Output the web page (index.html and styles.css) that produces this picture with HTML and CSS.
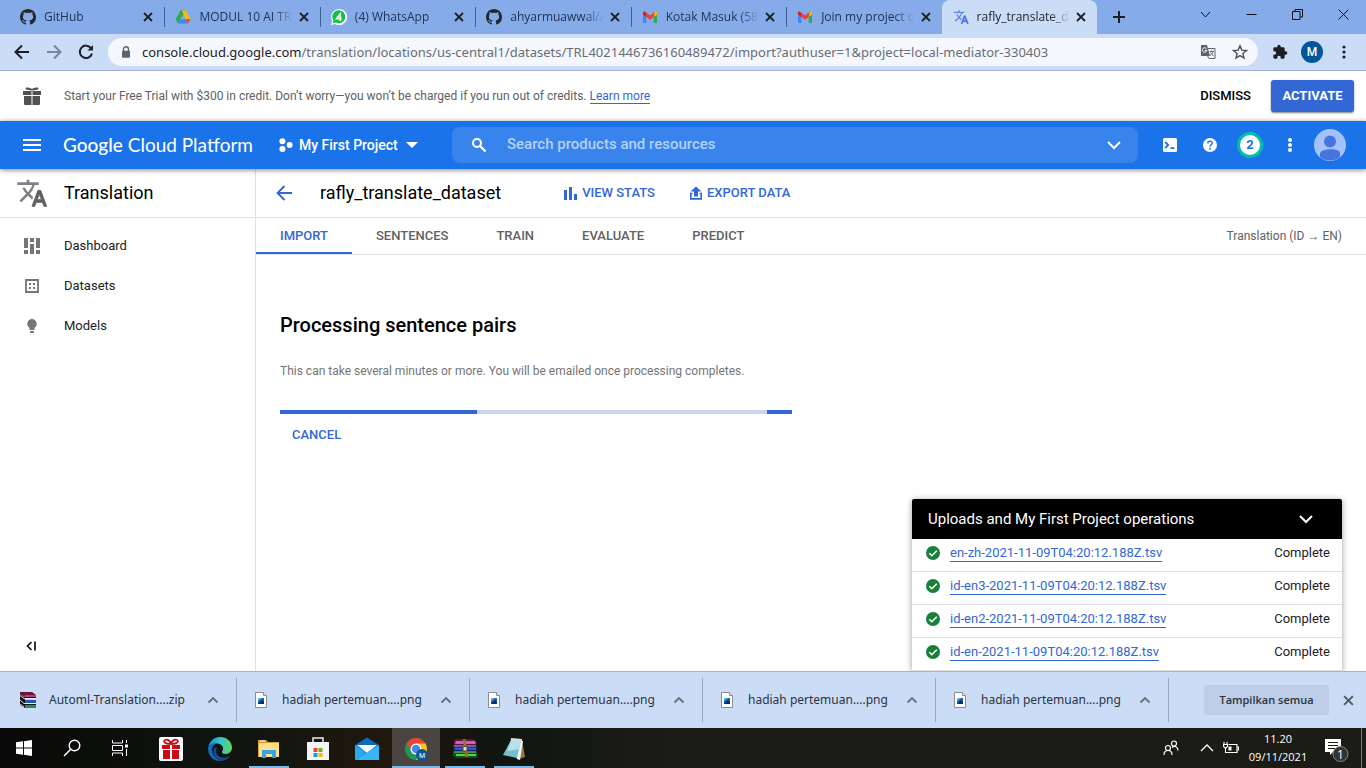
FILE: index.html
```html
<!DOCTYPE html>
<html lang="en">
<head>
<meta charset="utf-8">
<meta name="viewport" content="width=device-width, initial-scale=1">
<title>rafly_translate_dataset</title>
<link rel="stylesheet" href="styles.css">
</head>
<body>
<svg class="sprite" aria-hidden="true">
  <symbol id="close" viewBox="0 0 10 10"><path d="M1 1l8 8M9 1L1 9" fill="none" stroke="currentColor" stroke-width="1.8"/></symbol>
  <symbol id="github" viewBox="0 0 16 16"><path fill="#24292f" d="M8 0C3.58 0 0 3.58 0 8c0 3.54 2.29 6.53 5.47 7.59.4.07.55-.17.55-.38 0-.19-.01-.82-.01-1.49-2.01.37-2.53-.49-2.69-.94-.09-.23-.48-.94-.82-1.13-.28-.15-.68-.52-.01-.53.63-.01 1.08.58 1.23.82.72 1.21 1.87.87 2.33.66.07-.52.28-.87.51-1.07-1.78-.2-3.64-.89-3.64-3.95 0-.87.31-1.59.82-2.15-.08-.2-.36-1.02.08-2.12 0 0 .67-.21 2.2.82.64-.18 1.32-.27 2-.27s1.36.09 2 .27c1.53-1.04 2.2-.82 2.2-.82.44 1.1.16 1.92.08 2.12.51.56.82 1.27.82 2.15 0 3.07-1.87 3.75-3.65 3.95.29.25.54.73.54 1.48 0 1.07-.01 1.93-.01 2.2 0 .21.15.46.55.38A8.01 8.01 0 0 0 16 8c0-4.42-3.58-8-8-8z"/></symbol>
  <symbol id="gmail" viewBox="0 0 16 16"><path fill="#4285f4" d="M1 4.5l3.3 2.4V14H2a1 1 0 0 1-1-1z"/><path fill="#34a853" d="M15 4.5l-3.3 2.4V14H14a1 1 0 0 0 1-1z"/><path fill="#fbbc04" d="M11.7 4.2v3.7L15 5.4V4c0-1.4-1.3-2-2.3-1.2z"/><path fill="#c5221f" d="M1 4v1.4l3.3 2.5V4.2l-1-1.4C2.300 2 1 2.600 1 4z"/><path fill="#ea4335" d="M3.300 2.800L8 6.500l4.700-3.700-1 5.100L8 10.700 4.300 7.900z"/></symbol>
  <symbol id="translate" viewBox="0 0 24 24"><path d="M12.870 15.070l-2.540-2.510.03-.03A17.520 17.520 0 0 0 14.070 6H17V4h-7V2H8v2H1v2h11.170C11.500 7.920 10.440 9.750 9 11.350 8.070 10.320 7.300 9.190 6.690 8h-2c.73 1.630 1.730 3.170 2.980 4.560l-5.090 5.020L4 19l5-5 3.110 3.110.76-2.040z" opacity=".8"/><path d="M18.500 10h-2L12 22h2l1.120-3h4.750L21 22h2zm-2.620 7l1.620-4.330L19.120 17z" stroke="currentColor" stroke-width=".7"/></symbol>
  <symbol id="image" viewBox="0 0 12 16"><path d="M.5.5h8l3 3v12H.5z" fill="#fff" stroke="#8d8d8d"/><path d="M8.500.5v3h3" fill="#eee" stroke="#8d8d8d"/><path fill="#1b62b5" d="M3 6h6v6H3z"/><path fill="#58b9f5" d="M3 6h4L3 9z"/><path fill="#0c2c62" d="M3 12l4-4 2 2v2z"/></symbol>
  <symbol id="up" viewBox="0 0 12 12"><path d="M1.500 8.500L6 4l4.500 4.500" fill="none" stroke="#6b7078" stroke-width="1.900"/></symbol>
  <symbol id="down" viewBox="0 0 16 16"><path d="M2 5l6 6 6-6" fill="none" stroke="#fff" stroke-width="2"/></symbol>
  <symbol id="check" viewBox="0 0 14 14"><circle cx="7" cy="7" r="7" fill="#188038"/><path d="M3.300 7.200l2.500 2.500 5-5" fill="none" stroke="#fff" stroke-width="1.600"/></symbol>
  <symbol id="rar" viewBox="0 0 16 16"><path fill="#6e1236" d="M0 0h12l4 3v2H5L0 2z"/><path fill="#c4388a" d="M5 3h11v2H5z"/><path fill="#111" d="M0 2l4 3h12v1H5v2h11v1H5v3h11v1H5v3L0 13z"/><path fill="#2358b5" d="M5 8h11v3H5z"/><path fill="#1c9161" d="M5 13h11v3H5z"/><path d="M0 3.500l4 3h12M0 8l4 3.500h12M0 12l4 3" fill="none" stroke="#eee" stroke-width=".9"/></symbol>
</svg>

<header class="browser">
  <div class="tabstrip">
    <div class="tabs">
      <div class="tab"><svg class="favicon"><use href="#github"/></svg><span class="tab-title">GitHub</span><button class="tab-close" aria-label="Close tab"><svg><use href="#close"/></svg></button></div>
      <div class="tab"><svg class="favicon" viewBox="0 0 16 16"><path fill="#34a853" d="M5.500 1.500L8 6 3 14.500.5 10.300z"/><path fill="#188038" d="M5.500 1.500h5L8 6z"/><path fill="#fbbc04" d="M6.500 1.500h4l5 8.800h-4.500z"/><path fill="#4285f4" d="M5.400 10.300h5.400l2.200 4.200H3z"/><path fill="#ea4335" d="M10.600 10.300h4.900L13 14.500z"/></svg><span class="tab-title">MODUL 10 AI TRA</span><button class="tab-close" aria-label="Close tab"><svg><use href="#close"/></svg></button></div>
      <div class="tab"><svg class="favicon" viewBox="0 0 16 16"><path fill="#fff" d="M0 16l1.200-4A8 8 0 1 1 4 14.900z"/><path fill="#12c143" d="M1.600 14.500l.9-3A6.500 6.500 0 1 1 5 13.600z"/><path d="M9.300 12V4.800L5.500 9.700h5.300" fill="none" stroke="#fff" stroke-width="1.600"/></svg><span class="tab-title">(4) WhatsApp</span><button class="tab-close" aria-label="Close tab"><svg><use href="#close"/></svg></button></div>
      <div class="tab"><svg class="favicon"><use href="#github"/></svg><span class="tab-title">ahyarmuawwal/A</span><button class="tab-close" aria-label="Close tab"><svg><use href="#close"/></svg></button></div>
      <div class="tab"><svg class="favicon"><use href="#gmail"/></svg><span class="tab-title">Kotak Masuk (588</span><button class="tab-close" aria-label="Close tab"><svg><use href="#close"/></svg></button></div>
      <div class="tab"><svg class="favicon"><use href="#gmail"/></svg><span class="tab-title">Join my project o</span><button class="tab-close" aria-label="Close tab"><svg><use href="#close"/></svg></button></div>
      <div class="tab active"><svg class="favicon blue"><use href="#translate"/></svg><span class="tab-title">rafly_translate_da</span><button class="tab-close" aria-label="Close tab"><svg><use href="#close"/></svg></button></div>
    </div>
    <button class="new-tab" aria-label="New tab"><svg viewBox="0 0 12 12"><path d="M6 0v12M0 6h12" stroke="#1c2026" stroke-width="2"/></svg></button>
    <div class="window-controls">
      <button aria-label="Search tabs"><svg viewBox="0 0 11 11"><path d="M1 3l4.500 5L10 3"/></svg></button>
      <button aria-label="Minimize"><svg viewBox="0 0 11 11"><path d="M.5 5.500h10"/></svg></button>
      <button aria-label="Restore"><svg viewBox="0 0 11 11"><path d="M.5 2.500h7.500v8H.5zM3 2.500V.5h7.500v7.500H8"/></svg></button>
      <button aria-label="Close"><svg viewBox="0 0 11 11"><path d="M.5.5l10 10M10.500.5l-10 10"/></svg></button>
    </div>
  </div>
  <div class="toolbar">
    <button class="tool" aria-label="Back"><svg viewBox="0 0 16 16"><path d="M15 8H2M8 1.500L1.500 8 8 14.500"/></svg></button>
    <button class="tool muted" aria-label="Forward"><svg viewBox="0 0 16 16"><path d="M1 8h13M8 1.500L14.500 8 8 14.500"/></svg></button>
    <button class="tool" aria-label="Reload"><svg viewBox="0 0 16 16"><path d="M13.200 4.400A6.200 6.200 0 1 0 14 9.500"/><path d="M9.500 6.500H15V1z" fill="#1c2026" stroke="none"/></svg></button>
    <div class="omnibox">
      <svg class="lock" viewBox="0 0 10 13"><path d="M2.500 5V3.200a2.500 2.500 0 0 1 5 0V5" fill="none" stroke="#5f6368" stroke-width="1.400"/><rect x="1" y="4.800" width="8" height="7" rx="1" fill="#5f6368"/></svg>
      <div class="url"><span class="host">console.cloud.google.com</span>/translation/locations/us-central1/datasets/TRL4021446736160489472/import?authuser=1&amp;project=local-mediator-330403</div>
      <button class="tool" aria-label="Translate this page"><svg viewBox="0 0 16 16"><path d="M6 4.500h9v10H9L7 11" fill="#f4f7fd" stroke="#5f6368" stroke-width="1"/><path d="M1 1h6l3 11H1z" fill="#5f6368" stroke="none"/><path d="M6.500 4.800a2.200 2.200 0 1 0 .3 1.700H4.800" stroke="#fff" stroke-width="1"/><path d="M9.500 7.500h4.500M11.500 6.500v1M13 7.500c-.5 2-1.500 3-3 4M10.500 8.500l3 3.500" stroke="#5f6368" stroke-width=".9"/></svg></button>
      <button class="tool" aria-label="Bookmark this page"><svg viewBox="0 0 16 16"><path d="M8 1.800l1.800 4.300 4.700.4-3.600 3 1.100 4.600-4-2.500-4 2.500 1.100-4.600-3.600-3 4.700-.4z" stroke="#4c5056" stroke-width="1.400"/></svg></button>
    </div>
    <button class="tool" aria-label="Extensions"><svg viewBox="0 0 24 24"><path fill="#1c2026" stroke="none" d="M20.500 11H19V7c0-1.100-.9-2-2-2h-4V3.500a2.500 2.500 0 0 0-5 0V5H4c-1.100 0-2 .9-2 2v3.800h1.500a2.700 2.700 0 0 1 0 5.400H2V20c0 1.100.9 2 2 2h3.800v-1.500a2.700 2.700 0 0 1 5.400 0V22H17c1.100 0 2-.9 2-2v-4h1.500a2.500 2.500 0 0 0 0-5z"/></svg></button>
    <button class="profile" aria-label="Profile M">M</button>
    <button class="tool" aria-label="Menu"><svg viewBox="0 0 16 16"><g fill="#1c2026" stroke="none"><circle cx="8" cy="3" r="1.600"/><circle cx="8" cy="8" r="1.600"/><circle cx="8" cy="13" r="1.600"/></g></svg></button>
  </div>
</header>

<section class="trial">
  <svg class="gift" viewBox="0 0 18 18"><g fill="#515151"><path d="M0 4h8.500v4H0zM9.500 4H18v4H9.500zM1 9h7.500v9H2.500C1.500 18 1 17.500 1 16.500zM9.500 9H17v7.500c0 1-.5 1.500-1.500 1.500h-6zM8.500 3.500C6 3 3 3 2.500 1.500 2.500 0 6 0 9 2c3-2 6.500-2 6.500-.5C15 3 12 3 9.500 3.500z"/></g></svg>
  <p>Start your Free Trial with $300 in credit. Don’t worry—you won’t be charged if you run out of credits. <a href="#">Learn more</a></p>
  <button class="dismiss">DISMISS</button>
  <button class="activate">ACTIVATE</button>
</section>

<div class="platform-bar">
  <button class="hamburger" aria-label="Navigation menu"><svg viewBox="0 0 18 12"><path d="M0 1h18M0 6h18M0 11h18" stroke="#fff" stroke-width="2"/></svg></button>
  <a class="logo" href="#"><b>Google</b> Cloud Platform</a>
  <button class="project"><svg viewBox="0 0 14 14"><g fill="#fff"><circle cx="3.400" cy="3.200" r="3"/><circle cx="3.400" cy="11" r="3"/><circle cx="10.600" cy="7" r="3"/></g></svg>My First Project<svg class="caret" viewBox="0 0 12 6"><path fill="#fff" d="M0 0h12L6 6z"/></svg></button>
  <div class="search">
    <svg viewBox="0 0 16 16"><circle cx="6" cy="6" r="4" fill="none" stroke="#fff" stroke-width="2"/><path d="M9 9l5.500 5.500" stroke="#fff" stroke-width="2.400"/></svg>
    <input type="text" placeholder="Search products and resources" aria-label="Search products and resources">
    <button aria-label="Show search options"><svg><use href="#down"/></svg></button>
  </div>
  <div class="bar-actions">
    <button aria-label="Cloud Shell"><svg viewBox="0 0 16 16"><rect x="1" y="1" width="14" height="14" rx="1.500" fill="#fff"/><path d="M3.200 5l3 3-3 3M8.500 11.200h4" fill="none" stroke="#1a73e8" stroke-width="1.800"/></svg></button>
    <button aria-label="Help"><svg viewBox="0 0 16 16"><circle cx="8" cy="8" r="7" fill="#fff"/><path d="M5.800 6.500C5.800 3.500 10.300 3.700 10.200 6.200 10.200 7.800 8 7.800 8 9.700" fill="none" stroke="#1a73e8" stroke-width="1.500"/><circle cx="8" cy="11.800" r="1" fill="#1a73e8"/></svg></button>
    <button aria-label="2 notifications"><span class="count">2</span></button>
    <button aria-label="More options"><svg viewBox="0 0 16 16"><g fill="#fff"><circle cx="8" cy="3" r="2"/><circle cx="8" cy="8" r="2"/><circle cx="8" cy="13" r="2"/></g></svg></button>
    <button aria-label="Account"><svg class="avatar" viewBox="0 0 32 32"><circle cx="16" cy="16" r="16" fill="#a4c2fa"/><circle cx="16" cy="12.500" r="6" fill="#4574df"/><path d="M6 28v-3c0-6 20-6 20-1v4a16 16 0 0 1-20 0z" fill="#4574df"/></svg></button>
  </div>
</div>

<div class="workspace">
  <aside class="sidebar">
    <div class="product"><svg><use href="#translate"/></svg><h1>Translation</h1></div>
    <nav>
      <a href="#"><svg viewBox="0 0 16 16"><path fill="#757575" d="M0 0h4v10H0zM0 12h4v4H0zM6 0h4v4H6zM6 6h4v10H6zM12 0h4v10h-4zM12 12h4v4h-4z"/></svg>Dashboard</a>
      <a href="#"><svg viewBox="0 0 16 16"><path d="M2 2h12v12H2z" fill="none" stroke="#757575" stroke-width="1.800"/><path fill="#757575" d="M5 5h2v2H5zM9 5h2v2H9zM5 9h2v2H5zM9 9h2v2H9z"/></svg>Datasets</a>
      <a href="#"><svg viewBox="0 0 16 16"><path fill="#757575" d="M8 1a4.800 4.800 0 0 0-2.500 8.800V12h5V9.800A4.800 4.800 0 0 0 8 1zM6 13h4v1.500L9 15H7l-1-.5z"/></svg>Models</a>
    </nav>
    <button class="collapse" aria-label="Collapse menu"><svg viewBox="0 0 10 10"><path d="M5.500 1L1.500 5l4 4M9 .5v9" fill="none" stroke="#111" stroke-width="1.700"/></svg></button>
  </aside>
  <main>
    <div class="dataset-bar">
      <button class="back" aria-label="Back"><svg viewBox="0 0 16 16"><path d="M16 8H1.500M8.500 1l-7 7 7 7" fill="none" stroke="#3367d6" stroke-width="1.900"/></svg></button>
      <h2>rafly_translate_dataset</h2>
      <button class="action stats"><svg viewBox="0 0 14 14"><path fill="#3367d6" d="M0 4h3v10H0zM5 1h3v13H5zM10 8h3v6h-3z"/></svg>VIEW STATS</button>
      <button class="action"><svg viewBox="0 0 14 14"><path d="M3.500 7.500H1.800v5.400h10.400V7.500h-1.700" fill="none" stroke="#3367d6" stroke-width="1.600"/><path fill="#3367d6" d="M7 .5l5.500 5H9v5H5v-5H1.500z"/></svg>EXPORT DATA</button>
    </div>
    <div class="sections">
      <a class="current" href="#">IMPORT</a><a href="#">SENTENCES</a><a href="#">TRAIN</a><a href="#">EVALUATE</a><a href="#">PREDICT</a>
      <span class="languages">Translation (ID → EN)</span>
    </div>
    <div class="status">
      <h3>Processing sentence pairs</h3>
      <p>This can take several minutes or more. You will be emailed once processing completes.</p>
      <div class="progress" role="progressbar" aria-label="Processing sentence pairs"><span></span><span></span></div>
      <button class="cancel">CANCEL</button>
    </div>
  </main>
  <section class="operations">
    <header>Uploads and My First Project operations<button aria-label="Collapse"><svg><use href="#down"/></svg></button></header>
    <ul>
      <li><svg><use href="#check"/></svg><a href="#">en-zh-2021-11-09T04:20:12.188Z.tsv</a><span>Complete</span></li>
      <li><svg><use href="#check"/></svg><a href="#">id-en3-2021-11-09T04:20:12.188Z.tsv</a><span>Complete</span></li>
      <li><svg><use href="#check"/></svg><a href="#">id-en2-2021-11-09T04:20:12.188Z.tsv</a><span>Complete</span></li>
      <li><svg><use href="#check"/></svg><a href="#">id-en-2021-11-09T04:20:12.188Z.tsv</a><span>Complete</span></li>
    </ul>
  </section>
</div>

<section class="downloads">
  <div class="download"><svg class="file"><use href="#rar"/></svg><span>Automl-Translation....zip</span><button aria-label="Options"><svg><use href="#up"/></svg></button></div>
  <div class="download"><svg class="file"><use href="#image"/></svg><span>hadiah pertemuan....png</span><button aria-label="Options"><svg><use href="#up"/></svg></button></div>
  <div class="download"><svg class="file"><use href="#image"/></svg><span>hadiah pertemuan....png</span><button aria-label="Options"><svg><use href="#up"/></svg></button></div>
  <div class="download"><svg class="file"><use href="#image"/></svg><span>hadiah pertemuan....png</span><button aria-label="Options"><svg><use href="#up"/></svg></button></div>
  <div class="download"><svg class="file"><use href="#image"/></svg><span>hadiah pertemuan....png</span><button aria-label="Options"><svg><use href="#up"/></svg></button></div>
  <button class="show-all">Tampilkan semua</button>
  <button class="shelf-close" aria-label="Close downloads"><svg><use href="#close"/></svg></button>
</section>

<footer class="taskbar">
  <div class="system-apps">
    <button aria-label="Start"><svg viewBox="0 0 24 24"><path fill="#fff" d="M4 6.200l7-.9v6.200H4zM12 5.200L20 4v7.500h-8zM4 12.500h7v6.200l-7-.9zM12 12.500h8V20l-8-1.200z"/></svg></button>
    <button aria-label="Search"><svg viewBox="0 0 24 24"><circle cx="14.500" cy="9.500" r="5.300" fill="none" stroke="#fff" stroke-width="1.400"/><path d="M10.700 13.300L4 20" stroke="#fff" stroke-width="1.500"/></svg></button>
    <button aria-label="Task View"><svg viewBox="0 0 24 24"><path d="M4.500 4v3h10V4M4.500 20v-3h10v3M4.500 9.500h10v5h-10zM18.500 4v3M18.500 13v7" fill="none" stroke="#fff"/><path fill="#fff" d="M17 8.500h3v3h-3z"/></svg></button>
  </div>
  <div class="apps">
    <button aria-label="Rewards"><svg viewBox="0 0 24 24"><rect width="24" height="24" rx="2" fill="#fff"/><path fill="#c70c18" d="M3 8h8v4H3zM13 8h8v4h-8zM4 13h7v9H4zM13 13h7v9h-7z"/><path d="M12 7C5 7 4 4 6 3s5 0 6 4c1-4 4-5 6-4s1 4-6 4z" fill="none" stroke="#c70c18" stroke-width="1.800"/></svg></button>
    <button aria-label="Edge"><svg viewBox="0 0 24 24"><defs><linearGradient id="edge-top"><stop stop-color="#1689d3"/><stop offset=".5" stop-color="#31c5d5"/><stop offset="1" stop-color="#64d84e"/></linearGradient></defs><path fill="url(#edge-top)" d="M.3 10C1.500 4 6.500 0 12 0c7 0 12 5 12 10.500 0 4-3 6.500-6.500 6.500-2.500 0-3.500-1-3.500-2s1-1.500 1-3.500c0-3-3-5-6.500-5C5 6.500 2 8 .3 10z"/><path fill="#1268bd" d="M0 12c0-4 4-5.700 8-5.500-3 1.500-4.500 5-3.500 9S9 22 13 23.900C6 24.600 0 19 0 12z"/><path fill="#114a91" d="M9 10.500c-2 3-1 9 6 10 3 .3 5.500-.5 7.500-1.700C20.500 22 17 24 13 24 6 22 3.500 15 6.500 11c.7-1 1.700-1 2.500-.5z"/></svg></button>
    <button class="running" aria-label="File Explorer"><svg viewBox="0 0 24 24"><path fill="#dca238" d="M1 3h8l2 2h11v15H1z"/><path fill="#ffe08a" d="M2 6h20v14H2z"/><path fill="#fff" d="M3 3.500h5v1H3z"/><path fill="#35a5e5" d="M5 13h14v8h-4v-4H9v4H5z"/></svg></button>
    <button aria-label="Store"><svg viewBox="0 0 24 24"><path d="M7 5.500V1h10v4.500" fill="none" stroke="#eee" stroke-width="1.500"/><path fill="#f4f4f4" d="M1 5h22v18H1z"/><path fill="#e64a21" d="M7.500 11h4v4h-4z"/><path fill="#6fb51f" d="M12.500 11h4v4h-4z"/><path fill="#129bdf" d="M7.500 16h4v4h-4z"/><path fill="#f7b800" d="M12.500 16h4v4h-4z"/></svg></button>
    <button aria-label="Mail"><svg viewBox="0 0 24 24"><path fill="#0b69b8" d="M0 8l12-7.500L24 8v14H0z"/><path fill="#f3f7fc" d="M2 8h20L12 16z"/><path fill="#2baaeb" d="M0 8l11 7.500L0 23z"/><path fill="#36b7f4" d="M24 8L0 23h24z"/></svg></button>
    <button class="running focused" aria-label="Chrome"><svg viewBox="0 0 24 24"><circle cx="12" cy="12" r="11" fill="#219653"/><path fill="#e74435" d="M12 12H6.500L2.500 6.500A11 11 0 0 1 21.500 6.500H12z"/><path fill="#fbc317" d="M12 6.500h9.500A11 11 0 0 1 12 23l5-9z"/><circle cx="12" cy="12" r="5.500" fill="#fff"/><circle cx="12" cy="12" r="4.200" fill="#438bea"/><circle cx="18" cy="18" r="6" fill="#0c5696"/><text x="18" y="20.500" class="chrome-user">M</text></svg></button>
    <button class="running" aria-label="WinRAR"><svg viewBox="0 0 24 24"><path fill="#641346" d="M1 3l3-1h17l2 3v4H1z"/><path fill="#d061ac" d="M3 4h19l1 3H2z"/><path fill="#16205c" d="M0 9h24v6H0z"/><path fill="#3151e0" d="M2 10.500h21v2.500H2z"/><path fill="#0f5218" d="M0 15h24v6H3l-3-2z"/><path fill="#46d940" d="M3 17h20v2H3z"/><path d="M1 9h22M1 15h22" stroke="#d5c9d5" stroke-width=".8"/><path d="M11 2l3 18" stroke="#a07022" stroke-width="2.500"/><path d="M10 9.500h4v4.500h-4z" fill="#ddd" stroke="#5d451d"/></svg></button>
    <button class="running" aria-label="Notepad"><svg viewBox="0 0 24 24"><path fill="#987448" d="M20 3l3 17-6 2z"/><path fill="#eefafa" d="M10 2l11 2-3 19-3-1z"/><path fill="#78bfcb" d="M9 3l10 1-4 17-14-3z"/><path fill="#b6e2e7" d="M9 3l10 1-2 8-11.500 2z"/><path d="M9 2l11 1" stroke="#dedede" stroke-width="2"/></svg></button>
  </div>
  <div class="tray">
    <button class="people" aria-label="People"><svg viewBox="0 0 16 16"><g fill="none" stroke="#fff" stroke-width="1.200"><circle cx="5" cy="8" r="2.500"/><path d="M1 15c0-6 8-6 8 0"/><circle cx="11" cy="3.500" r="2.500"/><path d="M9 7.500c2.500-2.500 6-.5 6 3"/></g></svg></button>
    <button class="more" aria-label="Show hidden icons"><svg viewBox="0 0 16 16"><path d="M2 11l6-6 6 6" fill="none" stroke="#fff" stroke-width="1.300"/></svg></button>
    <button class="power" aria-label="Battery"><svg viewBox="0 0 16 16"><path d="M5.500 4.500h8.500v8H4.500M14 7h1.500v3H14M2.500 8.500v4h2M1 2v2M4 2v2M.5 4.500h4v2l-2 2-2-2z" fill="none" stroke="#fff" stroke-width="1.100"/><path fill="#fff" d="M5.500 6.500h3v4h-3z"/></svg></button>
    <time class="clock"><span>11.20</span><span>09/11/2021</span></time>
    <button class="notice" aria-label="1 notification"><svg viewBox="0 0 24 24"><path fill="#fff" d="M0 1h16v13H8l-3 3v-3H0z"/><path d="M3 4.500h10M3 7.500h10M3 10.500h7" stroke="#1b1b17"/><circle cx="15.500" cy="16" r="7.500" fill="#333" stroke="#888"/><text x="15.500" y="20.500" class="notice-count">1</text></svg></button>
  </div>
</footer>
</body>
</html>
```
FILE: styles.css
```css
* { box-sizing: border-box; }
body {
  margin: 0;
  min-height: 100vh;
  display: flex;
  flex-direction: column;
  font: 13px/20px Roboto, "Liberation Sans", sans-serif;
  color: #000;
  background: #fff;
}
h1, h2, h3, p, ul { margin: 0; padding: 0; }
h1, h2, h3 { font-weight: 400; }
button { border: 0; padding: 0; background: none; font: inherit; color: inherit; display: flex; align-items: center; justify-content: center; }
svg { display: block; flex: none; }
.sprite { position: absolute; width: 0; height: 0; }

.browser, .downloads, .taskbar { font-family: "Open Sans", "Noto Sans", sans-serif; }
.tabstrip { display: flex; height: 34px; background: #85ace9; }
.tabs { display: grid; grid-template-columns: repeat(7, 1fr); flex: 0 1 1097px; min-width: 0; padding-left: 9px; }
.tab { display: flex; align-items: center; gap: 8px; padding: 0 11px; min-width: 0; font-size: 12px; color: #1f3050; }
.tab + .tab { background: linear-gradient(#3f5f96, #3f5f96) left center / 1px 20px no-repeat; }
.tab.tab.active { background: #cbdcf7; color: #20242c; border-radius: 8px 8px 0 0; }
.favicon { width: 16px; height: 16px; }
.favicon.blue { color: #4272db; fill: #4272db; }
.tab-title { flex: 1; min-width: 0; margin-right: -6px; overflow: hidden; white-space: nowrap; mask-image: linear-gradient(90deg, #000 calc(100% - 24px), transparent calc(100% - 4px)); }
.tab-close { color: #1c2026; }
.tab-close svg { width: 10px; height: 10px; }
.new-tab { width: 44px; }
.new-tab svg { width: 12px; height: 12px; }
.window-controls { display: flex; margin-left: auto; height: 29px; }
.window-controls button { width: 46px; }
.window-controls svg { width: 11px; height: 11px; fill: none; stroke: #111; }

.toolbar { display: flex; align-items: center; height: 37px; padding: 0 6px; background: #cbdcf7; border-bottom: 1px solid #a3aecb; }
.tool { width: 32px; height: 28px; }
.tool svg { width: 16px; height: 16px; fill: none; stroke: #1c2026; stroke-width: 2; }
.tool.muted { opacity: .45; }
.omnibox { flex: 1; min-width: 0; display: flex; align-items: center; height: 28px; margin: 0 6px; padding: 0 2px 0 13px; border-radius: 14px; background: #f4f7fd; }
.lock { width: 10px; height: 13px; margin-right: 11px; }
.url { flex: 1; min-width: 0; overflow: hidden; white-space: nowrap; font: 13px/20px "Noto Sans", sans-serif; color: #6a6e74; }
.host { color: #1e2126; }
.profile { width: 22px; height: 22px; margin: 0 5px; border-radius: 50%; background: #01579b; color: #fff; font: 500 12px Roboto, sans-serif; }

.trial { display: flex; align-items: center; min-height: 50px; padding: 0 12px 0 23px; }
.gift { width: 18px; height: 18px; margin-right: 23px; }
.trial p { flex: 1; font-size: 12px; color: #616161; }
.trial a { color: #3367d6; text-decoration: none; border-bottom: 1px solid; }
.dismiss { padding: 0 20px; font-weight: 500; }
.activate { min-width: 83px; height: 32px; padding: 0 11px; border-radius: 3px; background: #3367d6; color: #fff; box-shadow: 0 1px 2px rgba(0, 0, 0, .5); font-weight: 700; }

.platform-bar { position: relative; z-index: 1; display: flex; align-items: center; min-height: 48px; padding: 0 16px; background: #1a73e8; color: #fff; box-shadow: 0 1px 5px rgba(0, 0, 0, .5); }
.hamburger { width: 32px; height: 32px; }
.hamburger svg { width: 18px; height: 12px; }
.logo { width: 215px; padding-left: 15px; font: 19px/24px Lato, sans-serif; color: #fff; text-decoration: none; white-space: nowrap; }
.logo b { font-weight: 500; }
.project { width: 189px; justify-content: flex-start; padding-left: 16px; gap: 6px; font-size: 14px; font-weight: 500; white-space: nowrap; }
.project svg { width: 14px; height: 14px; }
.project .caret { width: 12px; height: 6px; margin-left: 2px; }
.search { flex: 1; min-width: 0; display: flex; align-items: center; height: 36px; padding: 0 16px 0 19px; border-radius: 8px; background: #3884ec; }
.search svg { width: 16px; height: 16px; }
.search input { flex: 1; min-width: 0; height: 20px; margin: 0 12px 2px 20px; padding: 0; border: 0; outline: 0; background: none; color: #fff; font: 500 15px/20px Roboto, sans-serif; }
.search input::placeholder { color: #b4d0f8; opacity: 1; }
.bar-actions { display: flex; margin-left: 12px; }
.bar-actions button { width: 40px; height: 40px; }
.bar-actions svg { width: 16px; height: 16px; }
.bar-actions .avatar { width: 32px; height: 32px; }
.count { width: 26px; height: 26px; border: 3px solid #00bfa5; border-radius: 50%; background: #fff; color: #1a73e8; font-weight: 700; }

.workspace { position: relative; flex: 1; display: flex; overflow: hidden; }
.sidebar { width: 256px; display: flex; flex-direction: column; border-right: 1px solid #e0e0e0; }
.product, .dataset-bar { display: flex; align-items: center; height: 49px; border-bottom: 1px solid #e0e0e0; }
.product { padding-left: 16px; gap: 16px; }
.product svg { width: 32px; height: 32px; fill: #616161; color: #616161; }
h1, h2 { font-size: 18px; line-height: 24px; }
nav { padding-top: 8px; }
nav a { display: flex; align-items: center; height: 40px; padding-left: 24px; gap: 24px; color: #212121; text-decoration: none; }
nav svg { width: 16px; height: 16px; }
.collapse { width: 32px; height: 32px; margin: auto 0 9px 15px; }
.collapse svg { width: 10px; height: 10px; }
main { flex: 1; min-width: 0; }
.dataset-bar { padding-left: 20px; }
.back svg { width: 16px; height: 16px; }
.dataset-bar h2 { margin-left: 28px; }
.action, .cancel { color: #3367d6; font-weight: 500; }
.action { gap: 4px; margin-left: 34px; white-space: nowrap; }
.action svg { width: 14px; height: 14px; }
.action.stats { margin-left: 63px; }
.sections { display: flex; height: 37px; border-bottom: 1px solid #e0e0e0; }
.sections a { padding: 8px 24px 0; color: #616161; text-decoration: none; font-weight: 500; }
.sections .current { color: #3367d6; border-bottom: 2px solid #3367d6; }
.languages { margin-left: auto; padding: 8px 24px 0 0; font-size: 12px; color: #616161; }
.status { padding: 58px 24px; }
h3 { font-size: 20px; line-height: 24px; font-weight: 500; }
.status p { margin: 24px 0 29px; font-size: 12px; color: #757575; }
.progress { display: flex; justify-content: space-between; max-width: 512px; height: 4px; background: #c8d6f3; }
.progress span { width: 197px; background: #3367d6; }
.progress span + span { width: 25px; }
.cancel { margin-left: 12px; height: 41px; }

.operations { position: absolute; right: 24px; bottom: 0; width: 430px; background: #fff; border-radius: 2px 2px 0 0; box-shadow: 0 1px 6px rgba(0, 0, 0, .4); }
.operations header { display: flex; align-items: center; justify-content: space-between; height: 40px; padding: 0 28px 0 16px; border-radius: 2px 2px 0 0; background: #000; color: #fff; font-size: 15px; }
.operations header svg { width: 16px; height: 16px; }
.operations ul { list-style: none; }
.operations li { display: flex; align-items: center; height: 33px; padding: 0 12px 4px 14px; border-bottom: 1px solid #e0e0e0; color: #212121; }
.operations li svg { width: 14px; height: 14px; margin-right: 10px; }
.operations li a { color: #3367d6; text-decoration: none; line-height: 16px; border-bottom: 1px solid; }
.operations li span { margin-left: auto; }

.downloads { display: flex; align-items: center; min-height: 57px; padding: 0 12px 0 4px; background: #cbdcf7; border-top: 1px solid #a3b5cc; font-size: 12px; color: #2a3342; }
.download { display: flex; align-items: center; width: 233px; height: 44px; padding: 0 17px 0 16px; border-right: 1px solid #98a9c4; font-family: "Noto Sans", sans-serif; white-space: nowrap; }
.file { width: 16px; height: 16px; margin-right: 13px; }
.download button { margin-left: auto; }
.download button svg { width: 12px; height: 12px; }
.show-all { width: 125px; height: 30px; margin-left: auto; border-radius: 3px; background: #becde8; font-size: 11px; font-weight: 600; white-space: nowrap; }
.shelf-close { margin-left: 14px; color: #555a62; }
.shelf-close svg { width: 11px; height: 11px; }

.taskbar { display: flex; min-height: 40px; background: linear-gradient(90deg, #080908, #111510 18%, #20180d 28%, #10150f 36%, #1c1c17 50%); color: #fff; }
.system-apps { display: flex; }
.system-apps button { width: 48px; }
.taskbar svg { width: 24px; height: 24px; }
.apps { display: flex; gap: 1px; padding-left: 3px; }
.apps button { width: 48px; padding: 1px 0 0; }
.apps .running { background: linear-gradient(#76b9ed, #76b9ed) center bottom / 40px 2px no-repeat; }
.apps .focused { background: linear-gradient(#76b9ed, #76b9ed) center bottom / 48px 2px no-repeat #4a4540; }
.chrome-user { font: 7px Roboto, sans-serif; fill: #fff; text-anchor: middle; }
.tray { display: flex; align-items: center; margin-left: auto; padding-right: 4px; }
.tray svg { width: 16px; height: 16px; }
.people { margin-right: 20px; }
.more { margin-right: 8px; }
.clock { display: flex; flex-direction: column; width: 78px; text-align: center; font-size: 11px; line-height: 18px; }
.notice { height: 40px; padding: 3px 12px 0 8px; border-right: 1px solid #777; }
.taskbar .notice svg { width: 24px; height: 24px; }
.notice-count { font: 12px "Open Sans", sans-serif; fill: #fff; text-anchor: middle; }
```
